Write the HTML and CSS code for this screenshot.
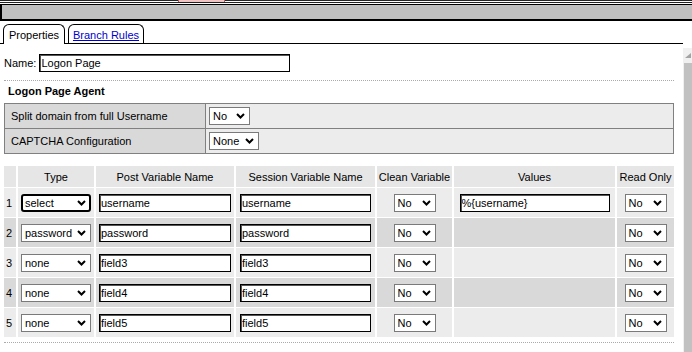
FILE: index.html
```html
<!DOCTYPE html>
<html>
<head>
<meta charset="utf-8">
<link rel="stylesheet" href="styles.css">
</head>
<body>
<div class="topline"><div class="hometab"></div></div>
<div class="graybar"></div>
<div class="tabs">
  <div class="tab active">Properties</div>
  <div class="tab"><a href="#">Branch Rules</a></div>
</div>
<div class="main">
  <div class="panel">
    <div class="name-row">
      <label class="name-label">Name:</label>
      <input class="txt name-input" type="text" value="Logon Page">
    </div>
    <div class="dotted"></div>
    <div class="section-title">Logon Page Agent</div>
    <table class="agent">
      <tr>
        <td class="lbl">Split domain from full Username</td>
        <td class="val"><span class="sel w41"><span>No</span><svg width="9" height="6" viewBox="0 0 9 6"><path d="M1 1L4.5 4.5L8 1" fill="none" stroke="#000" stroke-width="2"/></svg></span></td>
      </tr>
      <tr>
        <td class="lbl">CAPTCHA Configuration</td>
        <td class="val"><span class="sel w50"><span>None</span><svg width="9" height="6" viewBox="0 0 9 6"><path d="M1 1L4.5 4.5L8 1" fill="none" stroke="#000" stroke-width="2"/></svg></span></td>
      </tr>
    </table>
    <table class="vars">
      <colgroup>
        <col class="c-num"><col class="c-type"><col class="c-post"><col class="c-sess"><col class="c-clean"><col class="c-vals"><col class="c-ro">
      </colgroup>
      <tr class="head">
        <th></th><th>Type</th><th>Post Variable Name</th><th>Session Variable Name</th><th>Clean Variable</th><th>Values</th><th>Read Only</th>
      </tr>
      <tr class="odd">
        <td class="num">1</td>
        <td><span class="sel w70 focus"><span>select</span><svg width="9" height="6" viewBox="0 0 9 6"><path d="M1 1L4.5 4.5L8 1" fill="none" stroke="#000" stroke-width="2"/></svg></span></td>
        <td><input class="txt w132" type="text" value="username"></td>
        <td><input class="txt w131" type="text" value="username"></td>
        <td><span class="sel w42"><span>No</span><svg width="9" height="6" viewBox="0 0 9 6"><path d="M1 1L4.5 4.5L8 1" fill="none" stroke="#000" stroke-width="2"/></svg></span></td>
        <td><input class="txt w150" type="text" value="%{username}"></td>
        <td><span class="sel w42"><span>No</span><svg width="9" height="6" viewBox="0 0 9 6"><path d="M1 1L4.5 4.5L8 1" fill="none" stroke="#000" stroke-width="2"/></svg></span></td>
      </tr>
      <tr class="even">
        <td class="num">2</td>
        <td><span class="sel w70"><span>password</span><svg width="9" height="6" viewBox="0 0 9 6"><path d="M1 1L4.5 4.5L8 1" fill="none" stroke="#000" stroke-width="2"/></svg></span></td>
        <td><input class="txt w132" type="text" value="password"></td>
        <td><input class="txt w131" type="text" value="password"></td>
        <td><span class="sel w42"><span>No</span><svg width="9" height="6" viewBox="0 0 9 6"><path d="M1 1L4.5 4.5L8 1" fill="none" stroke="#000" stroke-width="2"/></svg></span></td>
        <td></td>
        <td><span class="sel w42"><span>No</span><svg width="9" height="6" viewBox="0 0 9 6"><path d="M1 1L4.5 4.5L8 1" fill="none" stroke="#000" stroke-width="2"/></svg></span></td>
      </tr>
      <tr class="odd">
        <td class="num">3</td>
        <td><span class="sel w70"><span>none</span><svg width="9" height="6" viewBox="0 0 9 6"><path d="M1 1L4.5 4.5L8 1" fill="none" stroke="#000" stroke-width="2"/></svg></span></td>
        <td><input class="txt w132" type="text" value="field3"></td>
        <td><input class="txt w131" type="text" value="field3"></td>
        <td><span class="sel w42"><span>No</span><svg width="9" height="6" viewBox="0 0 9 6"><path d="M1 1L4.5 4.5L8 1" fill="none" stroke="#000" stroke-width="2"/></svg></span></td>
        <td></td>
        <td><span class="sel w42"><span>No</span><svg width="9" height="6" viewBox="0 0 9 6"><path d="M1 1L4.5 4.5L8 1" fill="none" stroke="#000" stroke-width="2"/></svg></span></td>
      </tr>
      <tr class="even">
        <td class="num">4</td>
        <td><span class="sel w70"><span>none</span><svg width="9" height="6" viewBox="0 0 9 6"><path d="M1 1L4.5 4.5L8 1" fill="none" stroke="#000" stroke-width="2"/></svg></span></td>
        <td><input class="txt w132" type="text" value="field4"></td>
        <td><input class="txt w131" type="text" value="field4"></td>
        <td><span class="sel w42"><span>No</span><svg width="9" height="6" viewBox="0 0 9 6"><path d="M1 1L4.5 4.5L8 1" fill="none" stroke="#000" stroke-width="2"/></svg></span></td>
        <td></td>
        <td><span class="sel w42"><span>No</span><svg width="9" height="6" viewBox="0 0 9 6"><path d="M1 1L4.5 4.5L8 1" fill="none" stroke="#000" stroke-width="2"/></svg></span></td>
      </tr>
      <tr class="odd">
        <td class="num">5</td>
        <td><span class="sel w70"><span>none</span><svg width="9" height="6" viewBox="0 0 9 6"><path d="M1 1L4.5 4.5L8 1" fill="none" stroke="#000" stroke-width="2"/></svg></span></td>
        <td><input class="txt w132" type="text" value="field5"></td>
        <td><input class="txt w131" type="text" value="field5"></td>
        <td><span class="sel w42"><span>No</span><svg width="9" height="6" viewBox="0 0 9 6"><path d="M1 1L4.5 4.5L8 1" fill="none" stroke="#000" stroke-width="2"/></svg></span></td>
        <td></td>
        <td><span class="sel w42"><span>No</span><svg width="9" height="6" viewBox="0 0 9 6"><path d="M1 1L4.5 4.5L8 1" fill="none" stroke="#000" stroke-width="2"/></svg></span></td>
      </tr>
    </table>
    <div class="dotted bottom"></div>
  </div>
  <div class="scrollbar">
    <div class="sb-arrow"><svg width="7" height="5" viewBox="0 0 7 5"><path d="M7 0L7 5L1 5Z" fill="#a3a3a3"/></svg></div>
    <div class="sb-thumb"></div>
  </div>
</div>
</body>
</html>
```
FILE: styles.css
```css
html, body {
  margin: 0;
  padding: 0;
  background: #fff;
  overflow: hidden;
}
body {
  font-family: "Liberation Sans", Arial, sans-serif;
  font-size: 11px;
  color: #000;
  width: 692px;
  height: 352px;
}
.topline {
  position: relative;
  height: 1px;
  border-top: 1px solid #222;
  border-bottom: 1px solid #222;
  margin-bottom: 1px;
}
.hometab {
  position: absolute;
  left: 178px;
  top: -1px;
  width: 45px;
  height: 2px;
  background: #f2c4c4;
  border-left: 1px solid #b06060;
  border-right: 1px solid #b06060;
}
.graybar {
  height: 14px;
  background: #c0c0c0;
  border-top: 1px solid #000;
  border-bottom: 2px solid #000;
  border-left: 2px solid #000;
}
.tabs {
  display: flex;
  align-items: flex-end;
  gap: 3px;
  height: 22px;
  padding-left: 3px;
  margin-right: 9px;
  border-bottom: 1px solid #000;
}
.tab {
  height: 19px;
  box-sizing: border-box;
  border: 1px solid #000;
  border-bottom: none;
  border-radius: 6px 6px 0 0;
  display: flex;
  align-items: center;
  justify-content: center;
  font-size: 11px;
  padding-top: 1px;
}
.tab.active {
  width: 62px;
  height: 20px;
  margin-bottom: -1px;
  background: #fff;
}
.tab:not(.active) {
  width: 76px;
}
.tab a {
  color: #0000cc;
  text-decoration: underline;
}
.main {
  display: flex;
}
.panel {
  width: 670px;
  padding-left: 4px;
}
.scrollbar {
  margin-top: 4px;
  margin-left: 9px;
  width: 9px;
  height: 304px;
  background: #f0f0f0;
  display: flex;
  flex-direction: column;
}
.sb-arrow {
  height: 15px;
  display: flex;
  align-items: center;
  justify-content: flex-end;
  padding-right: 1px;
}
.sb-thumb {
  flex: 1;
  margin-left: 1px;
  background: #c1c1c1;
}
.name-row {
  display: flex;
  align-items: center;
  gap: 3px;
  padding-top: 10px;
  height: 18px;
}
.txt {
  box-sizing: border-box;
  height: 18px;
  border: 1px solid #000;
  box-shadow: inset 1px 1px 0 #555;
  padding: 0 1px;
  margin: 0;
  font-family: "Liberation Sans", Arial, sans-serif;
  font-size: 11px;
  color: #000;
  background: #fff;
  outline: none;
}
.name-input { width: 251px; }
.w132 { width: 132px; }
.w131 { width: 131px; }
.w150 { width: 150px; }
.dotted {
  margin-top: 8px;
  border-top: 1px dotted #aaa;
}
.dotted.bottom {
  margin-top: 4px;
}
.section-title {
  font-weight: bold;
  font-size: 11px;
  padding: 4px 0 0 4px;
  height: 18px;
}
table.agent {
  width: 670px;
  border-collapse: collapse;
  margin-bottom: 11px;
}
table.agent td {
  border: 1px solid #808080;
  height: 24px;
  padding: 0;
}
table.agent td.lbl {
  width: 194px;
  background: #d9d9d9;
  padding-left: 6px;
}
table.agent td.val {
  background: #ececec;
  padding-left: 3px;
}
.sel {
  display: inline-flex;
  align-items: center;
  justify-content: space-between;
  box-sizing: border-box;
  height: 18px;
  border: 1px solid #7a7a7a;
  background: #fff;
  padding: 0 4px 0 3px;
  vertical-align: middle;
  text-align: left;
}
.sel.focus {
  border: 2px solid #000;
  border-radius: 3px;
  padding: 0 3px 0 2px;
}
.w41 { width: 41px; }
.w42 { width: 42px; }
.w50 { width: 50px; }
.w70 { width: 70px; }
table.vars {
  border-collapse: separate;
  border-spacing: 2px 1px;
  margin-left: -2px;
  table-layout: fixed;
  width: 674px;
}
.c-num { width: 12px; }
.c-type { width: 76px; }
.c-post { width: 138px; }
.c-sess { width: 139px; }
.c-clean { width: 75px; }
.c-vals { width: 161px; }
.c-ro { width: 57px; }
table.vars th {
  background: #e6e6e6;
  font-weight: normal;
  height: 21px;
  padding: 0;
  text-align: center;
}
table.vars td {
  height: 29px;
  padding: 0;
  text-align: center;
  vertical-align: middle;
}
table.vars td.num {
  text-align: left;
  padding-left: 2px;
}
tr.odd td { background: #ececec; }
tr.even td { background: #d9d9d9; }
```
